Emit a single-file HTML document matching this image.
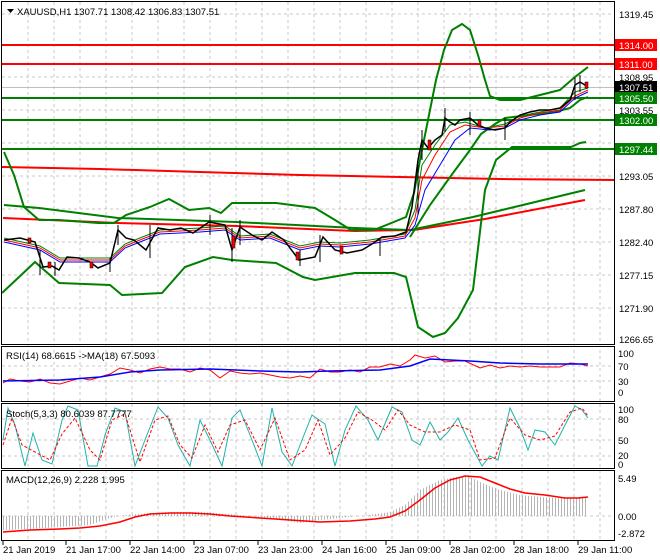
<!DOCTYPE html>
<html><head><meta charset="utf-8"><style>
body{margin:0;background:#fff;width:660px;height:560px;overflow:hidden}
svg{display:block;font-family:"Liberation Sans",sans-serif;font-size:9.5px}
</style></head><body>
<svg width="660" height="560" viewBox="0 0 660 560">
<defs>
<pattern id="hb" width="3" height="10" patternUnits="userSpaceOnUse"><rect x="0" y="0" width="1" height="10" fill="#b4b4b4"/></pattern>
<clipPath id="mc"><rect x="2" y="2" width="612" height="342"/></clipPath>
</defs>
<rect width="660" height="560" fill="#fff"/>
<g stroke="#c8c8c8" stroke-dasharray="3,3" stroke-width="1">
<path d="M28 2V540M54 2V540M80 2V540M106 2V540M132 2V540M158 2V540M184 2V540M210 2V540M236 2V540M262 2V540M288 2V540M314 2V540M340 2V540M366 2V540M392 2V540M418 2V540M444 2V540M470 2V540M496 2V540M522 2V540M548 2V540M574 2V540M600 2V540"/>
<path d="M2 14H614M2 77H614M2 110H614M2 143H614M2 176H614M2 209H614M2 242H614M2 275H614M2 308H614M2 366H614M2 381H614M2 419H614M2 440H614M2 456H614M2 516H614"/>
</g>
<g fill="none" stroke="#000" stroke-width="1">
<rect x="1.5" y="1.5" width="613" height="343"/>
<rect x="1.5" y="346.5" width="613" height="55"/>
<rect x="1.5" y="403.5" width="613" height="65"/>
<rect x="1.5" y="470.5" width="613" height="70"/>
</g>
<g clip-path="url(#mc)" fill="none">
<line x1="2" y1="45" x2="614" y2="45" stroke="#f00" stroke-width="2"/>
<line x1="2" y1="64" x2="614" y2="64" stroke="#f00" stroke-width="2"/>
<line x1="2" y1="87.5" x2="614" y2="87.5" stroke="#c0c0c0"/>
<line x1="2" y1="98" x2="614" y2="98" stroke="#008000" stroke-width="2"/>
<line x1="2" y1="120" x2="614" y2="120" stroke="#008000" stroke-width="2"/>
<line x1="2" y1="149" x2="614" y2="149" stroke="#008000" stroke-width="2"/>
<polyline stroke="#f00" stroke-width="2" points="2,167 100,169 200,172 300,175 400,177 500,179 614,180"/>
<polyline stroke="#f00" stroke-width="2" points="3,218 118,223 236,226 355,231 414,230 485,219 585,200"/>
<polyline stroke="#008000" stroke-width="2" points="4,152 14,175 24,207 39,220 59,220 98,223 114,223 126,215 150,207 169,199 189,210 209,208 221,213 232,203 276,203 315,208 335,220 351,230 374,230 406,217 414,193 420,160 428,120 436,80 444,50 452,30 462,24 470,30 478,55 485,80 490,96 500,100 520,100 540,95 560,90 575,77 588,67"/>
<polyline stroke="#008000" stroke-width="2" points="2,293 35,262 59,283 110,285 122,295 162,293 185,267 213,257 232,260 276,263 303,277 315,280 355,273 394,273 406,277 418,327 433,337 445,333 458,318 473,290 485,190 496,160 512,147 571,147 580,143 586,142"/>
<polyline stroke="#008000" stroke-width="2" points="4,205 39,208 118,218 236,222 355,228 410,230 473,217 585,190"/>
<polyline stroke="#008000" stroke-width="2" points="410,237 430,205 453,173 470,150 481,134 495,124 505,118 530,115 555,112 570,108 580,100 588,97"/>
<polyline stroke="#00f" stroke-width="1" points="4,242 40,250 60,262 110,262 125,248 160,234 200,232 225,230 240,240 270,238 300,250 320,246 340,247 370,244 405,238 415,225 425,190 440,165 455,140 470,128 490,130 505,128 520,120 540,115 560,112 575,98 588,92"/>
<polyline stroke="#f00" stroke-width="1" points="4,240 40,248 60,260 110,260 125,246 160,232 200,230 225,228 240,238 270,236 300,248 320,244 340,245 370,242 405,236 415,218 422,180 435,155 450,132 465,125 485,128 505,126 520,118 540,113 560,110 575,96 588,90"/>
<polyline stroke="#008000" stroke-width="1" points="4,238 40,246 60,258 110,258 125,244 160,230 200,228 225,226 240,236 270,234 300,246 320,242 340,243 370,240 405,234 415,210 422,165 435,145 450,125 465,122 485,128 505,124 520,116 540,112 560,108 575,92 588,88"/>
<polyline stroke="#000" stroke-width="1.5" points="4,240 20,238 35,242 43,267 52,266 59,270 67,257 79,258 90,262 98,268 110,263 118,230 126,238 134,240 146,250 158,228 170,230 181,228 193,233 209,222 225,225 232,250 240,227 252,235 262,240 272,232 284,240 299,260 315,257 323,237 335,250 347,253 362,250 372,244 382,237 395,236 406,232 412,207 418,160 422,140 428,148 435,140 442,135 445,118 450,122 455,125 460,120 470,118 478,125 485,128 495,130 505,128 510,122 520,115 530,112 540,110 550,110 560,108 570,100 575,85 580,82 585,85 588,88"/>
<path stroke="#000" d="M40 250V275M55 262V276M110 258V272M118 225V245M150 225V258M210 215V235M232 228V262M240 220V245M300 250V266M320 235V262M380 238V256M418 165V215M422 130V160M445 108V132M470 112V135M505 118V140M575 78V100M580 75V92"/>
<g fill="#f00" stroke="#000" stroke-width="0.5">
<rect x="28" y="238" width="3" height="5"/><rect x="48" y="262" width="3" height="6"/><rect x="90" y="262" width="3" height="6"/><rect x="232" y="236" width="3" height="12"/><rect x="296" y="252" width="3" height="8"/><rect x="340" y="246" width="3" height="8"/><rect x="428" y="140" width="3" height="10"/><rect x="478" y="120" width="3" height="6"/><rect x="585" y="82" width="3" height="6"/>
</g>
</g>
<g fill="#000">
<text x="619" y="18">1319.45</text>
<text x="619" y="81">1308.95</text>
<text x="619" y="114">1303.55</text>
<text x="619" y="180">1293.05</text>
<text x="619" y="213">1287.80</text>
<text x="619" y="246">1282.40</text>
<text x="619" y="279">1277.15</text>
<text x="619" y="312">1271.90</text>
<text x="619" y="343">1266.65</text>
</g>
<rect x="615" y="39" width="42" height="12" fill="#f00"/><text x="619" y="49" fill="#fff">1314.00</text>
<rect x="615" y="58" width="42" height="12" fill="#f00"/><text x="619" y="68" fill="#fff">1311.00</text>
<rect x="615" y="81" width="42" height="12" fill="#000"/><text x="619" y="91" fill="#fff">1307.51</text>
<rect x="615" y="92" width="42" height="12" fill="#008000"/><text x="619" y="102" fill="#fff">1305.50</text>
<rect x="615" y="114" width="42" height="12" fill="#008000"/><text x="619" y="124" fill="#fff">1302.00</text>
<rect x="615" y="143" width="42" height="12" fill="#008000"/><text x="619" y="153" fill="#fff">1297.44</text>
<path d="M7 9h7l-3.5 4z" fill="#000"/>
<text x="17" y="15" fill="#000">XAUUSD,H1  1307.71 1308.42 1306.83 1307.51</text>
<text x="6" y="359">RSI(14) 68.6615  -&gt;MA(18) 67.5093</text>
<polyline fill="none" stroke="#f00" points="3,383 10,379 20,381 30,382 40,379 50,383 60,384 70,381 80,378 90,380 100,377 110,374 120,368 130,370 140,373 150,369 160,367 170,369 180,369 190,372 200,368 210,370 220,378 230,371 240,373 250,374 260,373 270,375 280,377 290,378 300,376 310,378 320,369 330,372 340,372 350,370 360,372 370,367 380,367 390,364 400,366 410,360 415,355 425,358 435,356 445,362 455,361 465,361 480,368 490,365 500,368 510,366 520,367 530,366 540,367 550,367 560,367 570,363 580,364 588,366"/>
<polyline fill="none" stroke="#00f" stroke-width="1.5" points="3,381 60,380 100,377 130,372 160,370 210,369 260,371 300,372 330,371 380,370 410,366 430,359 450,360 470,361 500,363 540,364 588,364"/>
<text x="618" y="357">100</text><text x="618" y="370">70</text><text x="618" y="385">30</text><text x="618" y="396">0</text>
<polyline fill="none" stroke="#20b2aa" points="3,440 8,408 15,425 25,466 33,433 42,460 52,464 62,420 68,406 78,410 88,466 97,466 105,435 115,408 125,412 135,466 145,440 158,407 168,418 178,445 190,466 200,420 210,440 222,466 232,418 240,410 252,440 262,466 272,408 282,452 292,466 302,440 312,415 325,424 335,466 345,430 356,406 368,420 378,440 392,407 402,412 412,440 420,445 430,422 440,440 448,432 458,418 468,440 482,466 490,456 498,460 510,408 520,428 528,450 535,430 545,432 555,445 565,425 575,406 582,410 588,418"/>
<polyline fill="none" stroke="#f00" stroke-dasharray="3,2" points="3,445 12,418 22,445 35,452 50,460 62,434 75,418 90,450 100,460 112,420 125,414 140,462 155,420 168,416 180,445 192,458 205,425 218,452 230,425 245,420 260,450 275,418 290,460 305,450 318,420 330,455 345,438 358,412 372,420 385,430 398,410 410,425 425,432 440,432 455,425 470,430 480,460 495,458 510,418 525,435 540,440 555,436 570,412 582,408 588,416"/>
<text x="6" y="417">Stoch(5,3,3) 80.6039 87.7777</text>
<text x="618" y="413">100</text><text x="618" y="423">80</text><text x="618" y="444">50</text><text x="618" y="459">20</text><text x="618" y="468">0</text>
<polygon fill="url(#hb)" points="3,516 3,530 30,529 60,527 90,525 110,518 125,515 150,513 180,512 200,512 230,514 270,518 300,523 320,520 360,516 390,512 405,505 420,490 440,480 455,477 470,477 480,482 500,490 520,495 540,497 560,498 588,498 588,516"/>
<polyline fill="none" stroke="#f00" stroke-width="1.5" points="3,532 30,530 60,529 80,528 100,526 120,522 135,517 150,514 170,513 190,513 210,514 230,516 260,518 290,520 320,522 350,521 375,519 390,517 405,511 420,500 435,488 450,480 465,476 480,477 495,483 510,489 525,493 545,495 565,498 578,498 588,497"/>
<text x="6" y="483">MACD(12,26,9) 2.228 1.995</text>
<text x="618" y="482">5.49</text><text x="618" y="520">0.00</text><text x="618" y="537">-2.872</text>
<g stroke="#000"><path d="M3 541v4M66 541v4M130 541v4M194 541v4M258 541v4M322 541v4M386 541v4M450 541v4M514 541v4M578 541v4"/></g>
<g>
<text x="3" y="553">21 Jan 2019</text><text x="66" y="553">21 Jan 17:00</text><text x="130" y="553">22 Jan 14:00</text><text x="194" y="553">23 Jan 07:00</text><text x="258" y="553">23 Jan 23:00</text><text x="322" y="553">24 Jan 16:00</text><text x="386" y="553">25 Jan 09:00</text><text x="450" y="553">28 Jan 02:00</text><text x="514" y="553">28 Jan 18:00</text><text x="578" y="553">29 Jan 11:00</text>
</g>
</svg>
</body></html>
